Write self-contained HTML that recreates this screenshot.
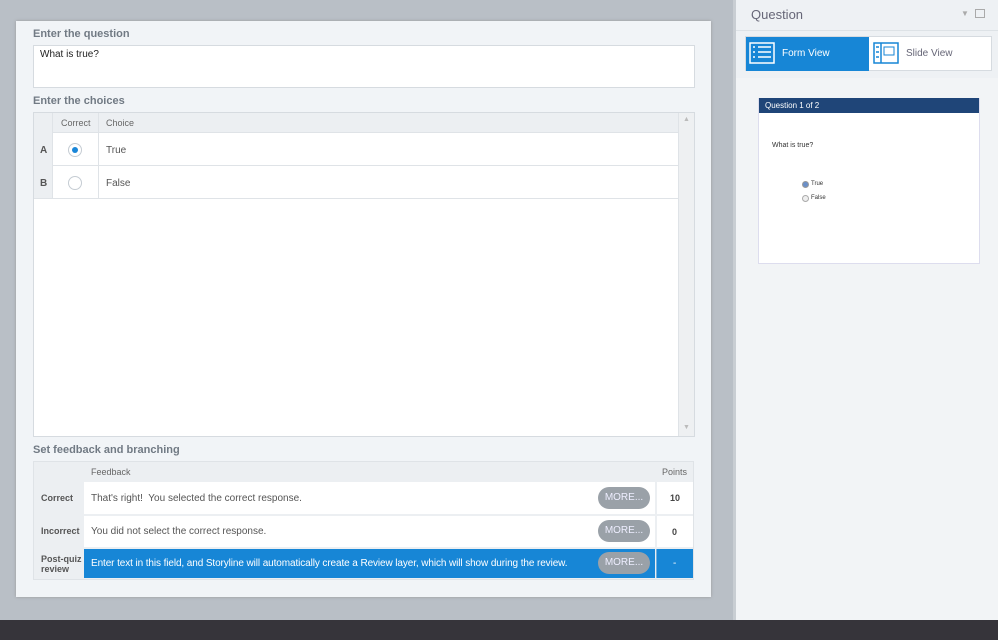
<!DOCTYPE html>
<html><head><style>
*{box-sizing:border-box;margin:0;padding:0}
body{width:998px;height:640px;position:relative;overflow:hidden;background:#b9bfc6;font-family:"Liberation Sans",sans-serif;font-size:10px;color:#444}
.a{position:absolute}
.lbl{font-size:11px;color:#5b6570;font-weight:bold;opacity:.85}
.more{position:absolute;width:52px;height:22px;border-radius:11px;background:#9aa1a8;color:#eef;font-size:10px;text-align:center;line-height:22px}
</style></head><body>
<div class="a" style="left:16px;top:21px;width:695px;height:576px;background:#f1f4f7;box-shadow:0 0 3px #999"></div>
<div class="a lbl" style="left:33px;top:28px">Enter the question</div>
<div class="a" style="left:33px;top:45px;width:662px;height:43px;background:#fff;border:1px solid #d6dbe0;padding:3px 6px;color:#222;font-size:10px">What is true?</div>
<div class="a lbl" style="left:33px;top:95px">Enter the choices</div>
<div class="a" style="left:33px;top:112px;width:662px;height:325px;background:#fff;border:1px solid #d6dbe0"></div>
<div class="a" style="left:34px;top:113px;width:660px;height:20px;background:#eceff2;border-bottom:1px solid #dfe3e7"></div>
<div class="a" style="left:34px;top:113px;width:19px;height:86px;background:#eceff2;border-right:1px solid #dfe3e7"></div>
<div class="a" style="left:98px;top:113px;width:1px;height:86px;background:#dfe3e7"></div>
<div class="a" style="left:678px;top:113px;width:16px;height:323px;background:#eef0f2;border-left:1px solid #dfe3e7"></div>
<div class="a" style="left:683px;top:116px;font-size:7px;color:#bbb">▲</div>
<div class="a" style="left:683px;top:424px;font-size:7px;color:#bbb">▼</div>
<div class="a" style="left:61px;top:118px;color:#666;font-size:9px">Correct</div>
<div class="a" style="left:106px;top:118px;color:#666;font-size:9px">Choice</div>
<div class="a" style="left:53px;top:165px;width:625px;height:1px;background:#dfe3e7"></div>
<div class="a" style="left:34px;top:198px;width:644px;height:1px;background:#dfe3e7"></div>
<div class="a" style="left:40px;top:145px;font-weight:bold;color:#555;font-size:10px">A</div>
<div class="a" style="left:40px;top:178px;font-weight:bold;color:#555;font-size:10px">B</div>
<div class="a" style="left:68px;top:143px;width:14px;height:14px;border-radius:50%;border:1px solid #c5ccd3;background:#fff"><div style="margin:3px;width:6px;height:6px;border-radius:50%;background:#1a86d8"></div></div>
<div class="a" style="left:68px;top:176px;width:14px;height:14px;border-radius:50%;border:1px solid #c5ccd3;background:#fff"></div>
<div class="a" style="left:106px;top:145px;color:#555">True</div>
<div class="a" style="left:106px;top:178px;color:#555">False</div>

<div class="a lbl" style="left:33px;top:444px">Set feedback and branching</div>
<div class="a" style="left:33px;top:461px;width:661px;height:119px;background:#eceff2;border:1px solid #dfe3e7"></div>
<div class="a" style="left:84px;top:482px;width:571px;height:32px;background:#fff"></div>
<div class="a" style="left:657px;top:482px;width:36px;height:32px;background:#fff"></div>
<div class="a" style="left:84px;top:516px;width:571px;height:31px;background:#fff"></div>
<div class="a" style="left:657px;top:516px;width:36px;height:31px;background:#fff"></div>
<div class="a" style="left:84px;top:549px;width:571px;height:29px;background:#1786d6"></div>
<div class="a" style="left:656px;top:549px;width:37px;height:29px;background:#1786d6;border-left:1px solid #6fb0e0"></div>
<div class="a" style="left:91px;top:467px;font-size:9px;color:#666">Feedback</div>
<div class="a" style="left:662px;top:467px;font-size:9px;color:#666">Points</div>
<div class="a" style="left:41px;top:493px;font-size:9px;font-weight:bold;color:#555">Correct</div>
<div class="a" style="left:41px;top:526px;font-size:9px;font-weight:bold;color:#555">Incorrect</div>
<div class="a" style="left:41px;top:554px;font-size:9px;font-weight:bold;color:#555;line-height:10px">Post-quiz<br>review</div>
<div class="a" style="left:91px;top:493px;color:#555">That's right!&nbsp; You selected the correct response.</div>
<div class="a" style="left:91px;top:526px;color:#555">You did not select the correct response.</div>
<div class="a" style="left:91px;top:558px;color:#fff;letter-spacing:-0.1px">Enter text in this field, and Storyline will automatically create a Review layer, which will show during the review.</div>
<div class="more" style="left:598px;top:487px">MORE...</div>
<div class="more" style="left:598px;top:520px">MORE...</div>
<div class="more" style="left:598px;top:552px">MORE...</div>
<div class="a" style="left:670px;top:493px;font-size:9px;font-weight:bold;color:#444">10</div>
<div class="a" style="left:672px;top:527px;font-size:9px;font-weight:bold;color:#444">0</div>
<div class="a" style="left:673px;top:558px;color:#fff">-</div>

<div class="a" style="left:733px;top:0;width:3px;height:620px;background:#c9ced3"></div>
<div class="a" style="left:736px;top:0;width:262px;height:620px;background:#eef1f4"></div>
<div class="a" style="left:736px;top:30px;width:262px;height:1px;background:#dde2e6"></div>
<div class="a" style="left:751px;top:7px;font-size:13px;color:#667">Question</div>
<div class="a" style="left:961px;top:9px;font-size:8px;color:#aaa">▼</div>
<div class="a" style="left:975px;top:9px;width:10px;height:9px;border:1px solid #aaa"></div>
<div class="a" style="left:745px;top:36px;width:247px;height:35px;background:#fff;border:1px solid #d6dbe0"></div>
<div class="a" style="left:746px;top:37px;width:123px;height:34px;background:#1786d6"></div>
<svg class="a" style="left:749px;top:42px" width="26" height="22"><rect x="1" y="1" width="24" height="20" fill="none" stroke="#fff" stroke-width="1.5"/><path d="M4 5h2M9 5h13M4 10h2M9 10h13M4 15h2M9 15h13" stroke="#fff" stroke-width="1.5"/></svg>
<div class="a" style="left:782px;top:48px;color:#fff">Form View</div>
<svg class="a" style="left:873px;top:42px" width="26" height="22"><rect x="1" y="1" width="24" height="20" fill="none" stroke="#1786d6" stroke-width="1.5"/><path d="M8 1v20M3 5h3M3 10h3M3 15h3" stroke="#1786d6" stroke-width="1.5"/><rect x="11" y="5" width="10" height="8" fill="none" stroke="#1786d6"/></svg>
<div class="a" style="left:906px;top:48px;color:#667">Slide View</div>
<div class="a" style="left:736px;top:78px;width:262px;height:542px;background:#f2f4f6"></div>
<div class="a" style="left:758px;top:98px;width:222px;height:166px;background:#fff;border:1px solid #dde"></div>
<div class="a" style="left:759px;top:98px;width:220px;height:15px;background:#1f4578;color:#fff;font-size:8px;padding:3px 6px">Question 1 of 2</div>
<div class="a" style="left:772px;top:142px;font-size:7px;color:#333">What is true?</div>
<div class="a" style="left:802px;top:181px;width:7px;height:7px;border-radius:50%;border:1px solid #999;background:#6a8fc8"></div>
<div class="a" style="left:811px;top:181px;font-size:6px;color:#333">True</div>
<div class="a" style="left:802px;top:195px;width:7px;height:7px;border-radius:50%;border:1px solid #aaa;background:#eee"></div>
<div class="a" style="left:811px;top:195px;font-size:6px;color:#333">False</div>
<div class="a" style="left:0;top:620px;width:998px;height:20px;background:#36343a"></div>
</body></html>
